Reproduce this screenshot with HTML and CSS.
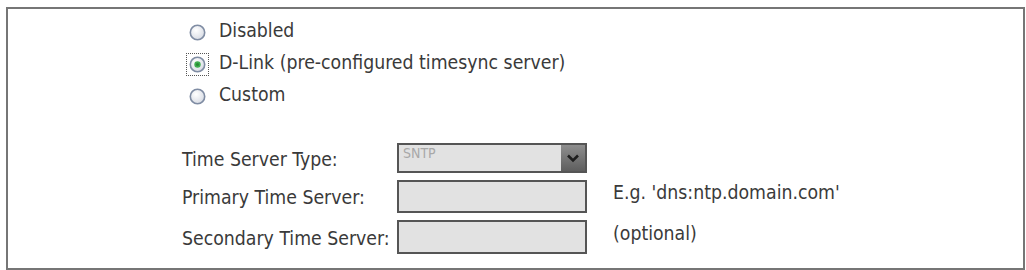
FILE: index.html
```html
<!DOCTYPE html>
<html>
<head>
<meta charset="utf-8">
<link rel="stylesheet" href="styles.css">
</head>
<body>
<div class="panel">
  <div class="options">
    <div class="opt">
      <span class="radio"><svg width="17" height="17" viewBox="0 0 17 17"><defs><radialGradient id="g1" cx="0.4" cy="0.35" r="0.7"><stop offset="0" stop-color="#ffffff"/><stop offset="1" stop-color="#d6dae3"/></radialGradient></defs><circle cx="8.5" cy="8.5" r="7.2" fill="url(#g1)" stroke="#7f8ca3" stroke-width="1.6"/></svg></span>
      <span class="txt">Disabled</span>
    </div>
    <div class="opt">
      <span class="radio focus"><svg width="17" height="17" viewBox="0 0 17 17"><circle cx="8.5" cy="8.5" r="7.2" fill="url(#g1)" stroke="#7f8ca3" stroke-width="1.6"/><circle cx="8.5" cy="8.5" r="3.2" fill="#3fae4f"/><circle cx="8.5" cy="8.5" r="1.6" fill="#2a8a36"/></svg></span>
      <span class="txt">D-Link (pre-configured timesync server)</span>
    </div>
    <div class="opt">
      <span class="radio"><svg width="17" height="17" viewBox="0 0 17 17"><circle cx="8.5" cy="8.5" r="7.2" fill="url(#g1)" stroke="#7f8ca3" stroke-width="1.6"/></svg></span>
      <span class="txt">Custom</span>
    </div>
  </div>
  <div class="form">
    <div class="lbl">Time Server Type:</div>
    <div class="select"><span class="sel-val">SNTP</span><span class="sel-btn"><svg width="14" height="10" viewBox="0 0 14 10"><path d="M2 2.5 L7 7.5 L12 2.5" fill="none" stroke="#1e1e1e" stroke-width="2.6"/></svg></span></div>
    <div class="hint"></div>
    <div class="lbl">Primary Time Server:</div>
    <div class="input"></div>
    <div class="hint">E.g. 'dns:ntp.domain.com'</div>
    <div class="lbl">Secondary Time Server:</div>
    <div class="input"></div>
    <div class="hint">(optional)</div>
  </div>
</div>
</body>
</html>
```

FILE: styles.css
```css
html, body {
  margin: 0;
  padding: 0;
  background: #ffffff;
}
body {
  font-family: "DejaVu Sans Condensed", "DejaVu Sans", sans-serif;
  font-size: 19.3px;
  color: #3a3a3a;
}
.panel {
  margin: 7px 0 0 6px;
  width: 1019px;
  height: 263px;
  box-sizing: border-box;
  border: 2px solid #767676;
  padding: 7px 0 0 173px;
}
.options {
  display: flex;
  flex-direction: column;
}
.opt {
  height: 32px;
  display: flex;
  align-items: center;
  padding-left: 8px;
}
.radio {
  width: 17px;
  height: 17px;
  display: flex;
  position: relative;
  margin-right: 13px;
}
.radio.focus::after {
  content: "";
  position: absolute;
  left: -3px;
  top: -3px;
  width: 23px;
  height: 23px;
  box-sizing: border-box;
  border: 1px dotted #555;
}
.txt {
  line-height: 1;
  position: relative;
  top: -1px;
}
.form {
  margin-top: 31px;
  margin-left: 1px;
  display: grid;
  grid-template-columns: 215px 190px auto;
  grid-template-rows: 30px 33px 34px;
  row-gap: 7px;
  align-items: center;
}
.lbl {
  white-space: nowrap;
  position: relative;
  top: 1px;
}
.hint {
  padding-left: 26px;
  white-space: nowrap;
  position: relative;
  top: -4px;
}
.select, .input {
  height: 100%;
  box-sizing: border-box;
  border: 2px solid #555555;
  background: #e2e2e2;
}
.select {
  display: flex;
  align-items: stretch;
}
.sel-val {
  flex: 1;
  font-size: 14px;
  line-height: 16px;
  color: #a8a8a8;
  padding: 0 0 0 4px;
}
.sel-btn {
  width: 24px;
  display: flex;
  align-items: center;
  justify-content: center;
  background: linear-gradient(to bottom, #8e8e8e, #5e5e5e);
}
```
